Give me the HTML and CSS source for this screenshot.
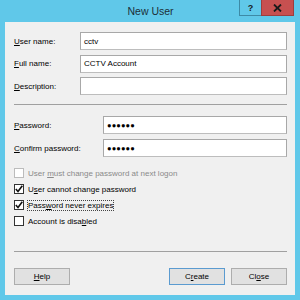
FILE: index.html
```html
<!DOCTYPE html>
<html>
<head>
<meta charset="utf-8">
<link rel="stylesheet" href="styles.css">
</head>
<body>
<div class="window">
  <div class="titlebar">
    <div></div>
    <div class="title">New User</div>
    <div class="controls">
      <div class="ctl help">?</div>
      <div class="ctl close">
        <svg width="9" height="8" viewBox="0 0 9 8"><path d="M1 0.5 L8 7.5 M8 0.5 L1 7.5" stroke="#1a1a1a" stroke-width="1.8"/></svg>
      </div>
    </div>
  </div>
  <div class="client">
    <div class="fields top">
      <label class="lbl"><u>U</u>ser name:</label>
      <div class="input">cctv</div>
      <label class="lbl"><u>F</u>ull name:</label>
      <div class="input">CCTV Account</div>
      <label class="lbl"><u>D</u>escription:</label>
      <div class="input"></div>
    </div>
    <div class="sep sep1"></div>
    <div class="fields pw">
      <label class="lbl"><u>P</u>assword:</label>
      <div class="input dots">●●●●●●</div>
      <label class="lbl"><u>C</u>onfirm password:</label>
      <div class="input dots">●●●●●●</div>
    </div>
    <div class="checks">
      <div class="chk disabled"><span class="box"></span><span class="txt">User <u>m</u>ust change password at next logon</span></div>
      <div class="chk"><span class="box"><svg width="8" height="8" viewBox="0 0 8 8"><path d="M0.8 4 L3 6.5 L7.3 0.8" fill="none" stroke="#111" stroke-width="1.6"/></svg></span><span class="txt">U<u>s</u>er cannot change password</span></div>
      <div class="chk"><span class="box"><svg width="8" height="8" viewBox="0 0 8 8"><path d="M0.8 4 L3 6.5 L7.3 0.8" fill="none" stroke="#111" stroke-width="1.6"/></svg></span><span class="txt focus">Pass<u>w</u>ord never expires</span></div>
      <div class="chk"><span class="box"></span><span class="txt">Account is disa<u>b</u>led</span></div>
    </div>
    <div class="spacer"></div>
    <div class="sep sep2"></div>
    <div class="buttons">
      <div class="btn"><u>H</u>elp</div>
      <div class="right">
        <div class="btn default">C<u>r</u>eate</div>
        <div class="btn">Cl<u>o</u>se</div>
      </div>
    </div>
  </div>
</div>
</body>
</html>
```
FILE: styles.css
```css
* { box-sizing: border-box; }
html, body { margin: 0; padding: 0; }
body {
  width: 300px;
  height: 300px;
  overflow: hidden;
  font-family: "Liberation Sans", Arial, sans-serif;
  font-size: 8px;
  color: #000;
}
.window {
  width: 300px;
  height: 300px;
  background: #60c8e9;
  display: flex;
  flex-direction: column;
  padding: 0 5px 5px 5px;
}
.titlebar {
  height: 22px;
  display: grid;
  grid-template-columns: 1fr auto 1fr;
  align-items: start;
  margin: 0 -1px 0 0;
}
.title {
  font-size: 10.5px;
  color: #1c2f38;
  padding-top: 5px;
}
.controls {
  justify-self: end;
  display: flex;
  margin-right: 2px;
}
.ctl {
  height: 16px;
  display: flex;
  align-items: center;
  justify-content: center;
}
.help {
  width: 22px;
  border: 1px solid #3d8aa6;
  border-top: none;
  border-right: none;
  font-weight: bold;
  font-size: 9px;
  color: #1a1a1a;
}
.close {
  width: 33px;
  background: #c75050;
  border: 1px solid #9d3e3e;
  border-top: none;
}
.client {
  flex: 1;
  background: #f0f0f0;
  display: flex;
  flex-direction: column;
  padding: 10px 8px 10px 9px;
}
.fields {
  display: grid;
  grid-template-columns: 66px 1fr;
  row-gap: 4.5px;
  align-items: center;
}
.fields.pw {
  grid-template-columns: 89px 1fr;
  row-gap: 5px;
}
.lbl { white-space: nowrap; }
.input {
  height: 18px;
  background: #fff;
  border: 1px solid #a8a8a8;
  border-bottom-color: #bdbdbd;
  padding: 0 3px;
  display: flex;
  align-items: center;
  font-size: 8px;
}
.input.dots {
  font-size: 7.5px;
  letter-spacing: 0.1px;
}
.sep {
  height: 1px;
  background: #a0a0a0;
}
.sep1 { margin: 9px 0 11px 0; }
.checks {
  margin-top: 8px;
  display: flex;
  flex-direction: column;
}
.chk {
  height: 16px;
  display: flex;
  align-items: center;
}
.box {
  width: 10px;
  height: 10px;
  border: 1px solid #333;
  background: #fff;
  margin-right: 3px;
  display: flex;
  align-items: center;
  justify-content: center;
}
.chk.disabled .box { border-color: #bcbcbc; }
.chk.disabled .txt { color: #8a8a8a; }
.txt { padding: 1px 1px; }
.txt.focus { outline: 1px dotted #444; outline-offset: -1px; }
.spacer { flex: 1; }
.sep2 { margin-bottom: 16px; }
.buttons {
  display: flex;
  justify-content: space-between;
}
.right { display: flex; gap: 6px; }
.btn {
  width: 56px;
  height: 17px;
  background: #e1e1e1;
  border: 1px solid #adadad;
  display: flex;
  align-items: center;
  justify-content: center;
}
.btn.default { border-color: #5b9bd0; }
```
